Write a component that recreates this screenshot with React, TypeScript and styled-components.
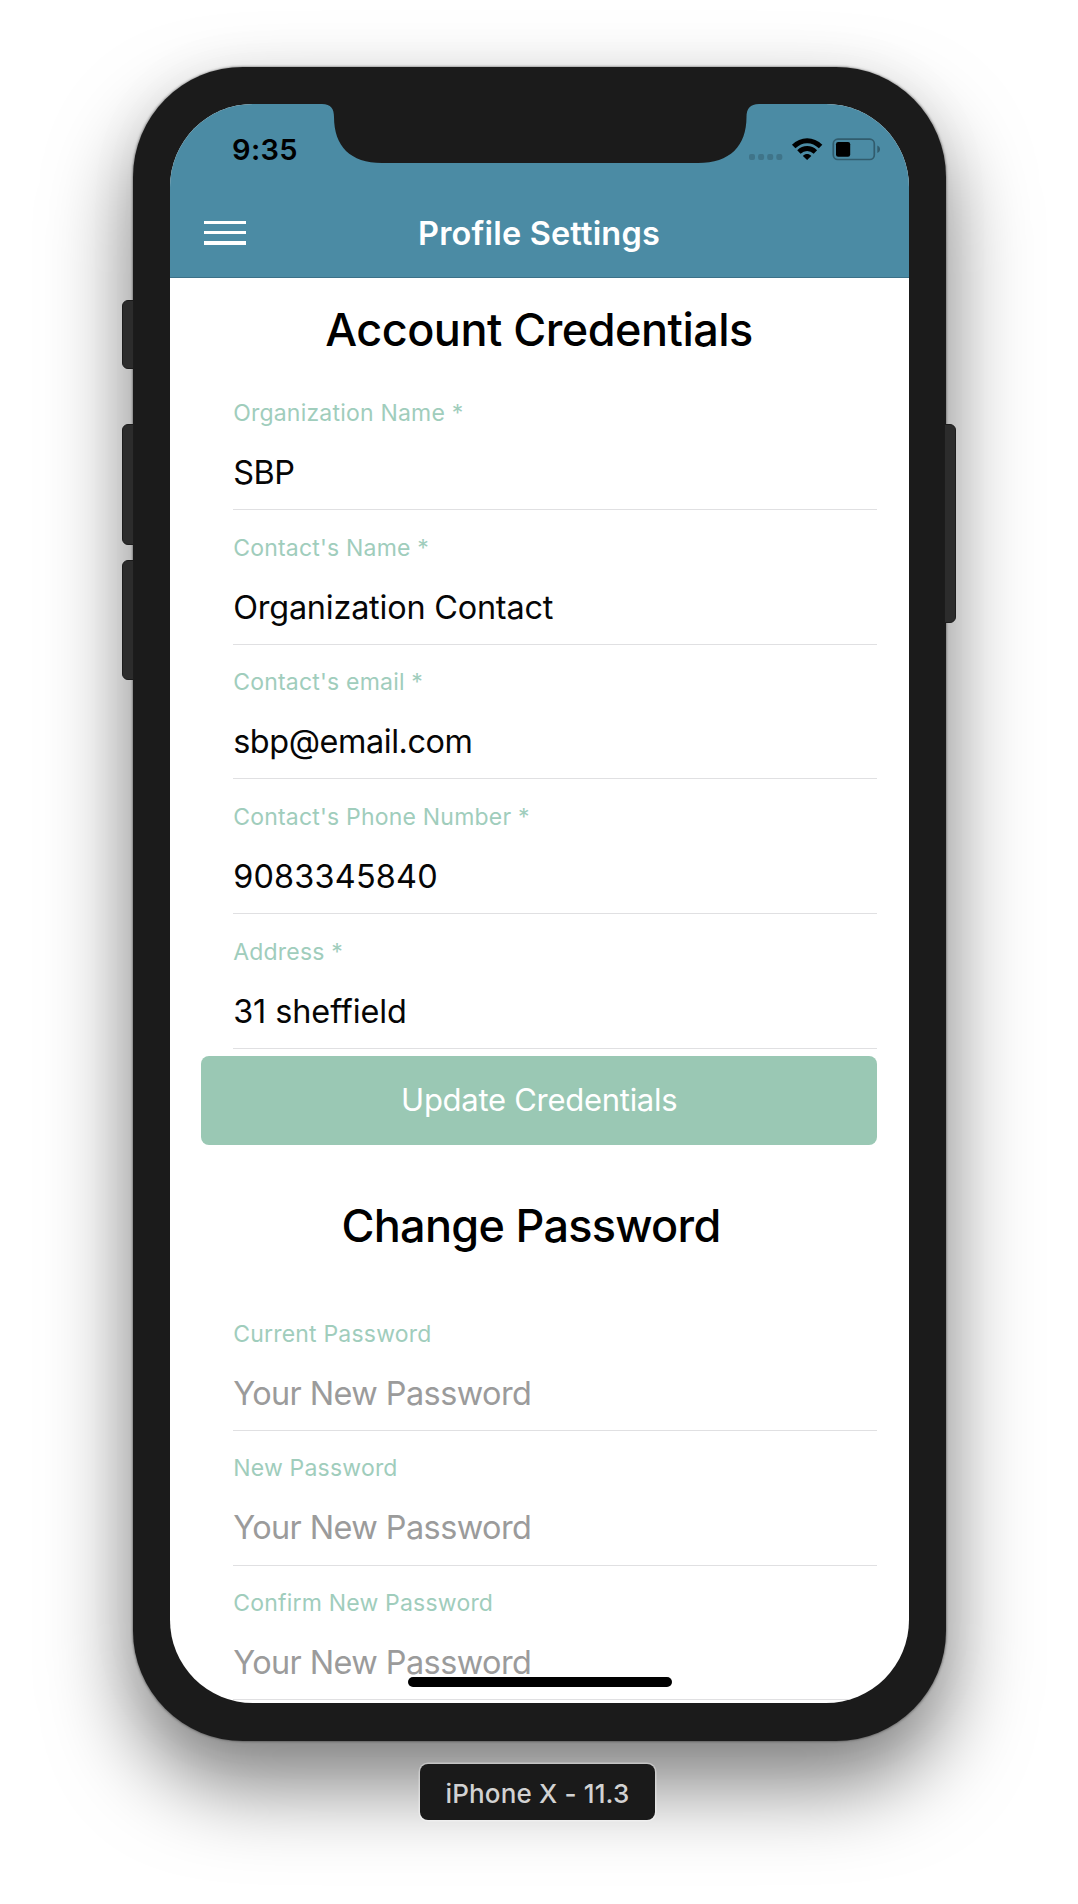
import React from "react";
import styled, { createGlobalStyle } from "styled-components";

const GlobalStyle = createGlobalStyle`
  * { box-sizing: border-box; }
  body { margin: 0; background: #fff; font-family: Inter, "Liberation Sans", sans-serif; }
`;

const Stage = styled.main`
  width: 1078px;
  height: 1904px;
  overflow: hidden;
  padding-top: 67px;
  display: flex;
  flex-direction: column;
  align-items: center;
  background: #fff;
`;

const Phone = styled.section`
  position: relative;
  width: 813px;
  height: 1674px;
  padding: 37px;
  border-radius: 110px;
  background: #1b1b1b;
  box-shadow: 0 0 2px 1px rgba(0, 0, 0, 0.3), 0 44px 84px rgba(0, 0, 0, 0.5), 0 0 60px rgba(0, 0, 0, 0.04);
`;

const SideKey = styled.span<{ $side: "left" | "right"; $top: number; $height: number }>`
  position: absolute;
  ${(p) => p.$side}: ${(p) => (p.$side === "left" ? -11 : -10)}px;
  top: ${(p) => p.$top}px;
  width: 12px;
  height: ${(p) => p.$height}px;
  border: 1.5px solid #1c1c1c;
  border-radius: ${(p) => (p.$side === "left" ? "6px 0 0 6px" : "0 6px 6px 0")};
  background: #2c2c2c;
`;

const Screen = styled.div`
  position: relative;
  width: 739px;
  height: 1599px;
  overflow: hidden;
  display: flex;
  flex-direction: column;
  background: #fff;
  border-radius: 83px;
`;

const Header = styled.header`
  flex: none;
  height: 173.5px;
  display: flex;
  flex-direction: column;
  background: #4b8ba4;
  border-bottom: 1px solid #3c7188;
`;

const StatusBar = styled.div`
  height: 87px;
  display: flex;
  align-items: flex-start;
  justify-content: space-between;
  padding: 31px 28px 0 62.6px;
`;

const Clock = styled.time`
  font-size: 29px;
  line-height: 29px;
  font-weight: 600;
  letter-spacing: 0.3px;
  color: #000;
`;

const StatusGlyphs = styled.svg`
  width: 133px;
  height: 26px;
  margin-top: 1px;
`;

const NavBar = styled.nav`
  flex: 1;
  display: grid;
  grid-template-columns: 42px 1fr 42px;
  align-items: center;
  padding: 0 34px;
`;

const MenuButton = styled.button`
  display: flex;
  flex-direction: column;
  gap: 7px;
  margin-bottom: 2px;
  padding: 0;
  border: 0;
  background: none;
`;

const MenuBar = styled.span`
  height: 3.4px;
  background: #fff;
`;

const NavTitle = styled.h1`
  margin: 0;
  text-align: center;
  font-size: 32.5px;
  line-height: 40px;
  font-weight: 600;
  letter-spacing: 0.18px;
  color: #fff;
`;

const Notch = styled.svg`
  position: absolute;
  left: 150px;
  top: 0;
  width: 440px;
  height: 60px;
`;

const Content = styled.div`
  flex: none;
  display: flex;
  flex-direction: column;
`;

const Heading = styled.h2<{ $height: number; $drop: number; $tracking: number; $shift?: number }>`
  margin: 0 ${(p) => p.$shift ?? 0}px 0 0;
  padding-top: ${(p) => p.$drop}px;
  height: ${(p) => p.$height}px;
  display: flex;
  align-items: center;
  justify-content: center;
  font-size: 45px;
  font-weight: 500;
  letter-spacing: ${(p) => p.$tracking}px;
  color: #000;
`;

const Field = styled.label`
  height: 134.65px;
  margin: 0 32px 0 63px;
  padding-left: 0.7px;
  display: flex;
  flex-direction: column;
  border-bottom: 1.4px solid #e0e0e2;
`;

const FieldLabel = styled.span`
  margin-top: 20.5px;
  font-size: 23px;
  line-height: 34px;
  letter-spacing: 0.2px;
  color: #a0cdbc;
`;

const FieldValue = styled.span<{ $placeholder?: boolean; $tracking: number }>`
  margin-top: 23px;
  font-size: 32.4px;
  line-height: 40px;
  white-space: nowrap;
  letter-spacing: ${(p) => p.$tracking}px;
  color: ${(p) => (p.$placeholder ? "#9b9b9b" : "#060606")};
`;

const SubmitButton = styled.button`
  margin: 7.3px 31.3px 0 31.7px;
  height: 88.6px;
  padding: 0;
  border: 0;
  border-radius: 8px;
  background: #9ac8b4;
  color: #fff;
  font: 400 31px/40px Inter, "Liberation Sans", sans-serif;
  letter-spacing: -0.28px;
`;

const HomeIndicator = styled.span`
  position: absolute;
  left: 238px;
  bottom: 16px;
  width: 264px;
  height: 9.6px;
  border-radius: 5px;
  background: #000;
`;

const DeviceTag = styled.footer`
  position: relative;
  left: -1.5px;
  margin-top: 23px;
  padding-top: 2px;
  width: 235px;
  height: 56px;
  display: flex;
  align-items: center;
  justify-content: center;
  border-radius: 8px;
  background: #1a1a1a;
  box-shadow: 0 0 0 1.5px rgba(255, 255, 255, 0.35);
  color: #d2d2d2;
  font-size: 26px;
  font-weight: 500;
  letter-spacing: 0.15px;
`;

const StatusIcons = () => (
  <StatusGlyphs viewBox="748 136 133 26" aria-hidden="true">
    {[749, 758.1, 767.2, 776.3].map((x) => (
      <rect key={x} x={x} y="154" width="6" height="6" rx="2" fill="#3f7489" />
    ))}
    <g fill="none" stroke="#000" strokeWidth="4.9">
      <path d="M793.7 146.6C801.5 138.8 812.8 138.8 820.6 146.6" />
      <path d="M798.9 152C803.8 147.4 810.5 147.4 815.4 152" />
    </g>
    <path d="M802.9 155.9C805.4 153.5 808.8 153.5 811.3 155.9L807.1 159.9Z" />
    <rect x="833.3" y="139.2" width="41" height="20.3" rx="4.5" fill="none" stroke="#315c6d" strokeWidth="1.7" />
    <rect x="836" y="142" width="14.2" height="14.8" rx="2.2" />
    <path d="M877.3 145.5C881 147 881 151.5 877.3 153Z" fill="#315c6d" />
  </StatusGlyphs>
);

type Entry = { label: string; value: string; tracking: number };

const account: Entry[] = [
  { label: "Organization Name *", value: "SBP", tracking: -0.4 },
  { label: "Contact's Name *", value: "Organization Contact", tracking: -0.2 },
  { label: "Contact's email *", value: "sbp@email.com", tracking: -0.42 },
  { label: "Contact's Phone Number *", value: "9083345840", tracking: 0.2 },
  { label: "Address *", value: "31 sheffield", tracking: -0.08 },
];

const passwords = ["Current Password", "New Password", "Confirm New Password"];

export default function App() {
  return (
    <Stage>
      <GlobalStyle />
      <Phone>
        <SideKey $side="left" $top={233} $height={69} />
        <SideKey $side="left" $top={357} $height={121} />
        <SideKey $side="left" $top={493} $height={120} />
        <SideKey $side="right" $top={357} $height={199} />
        <Screen>
          <Header>
            <StatusBar>
              <Clock>9:35</Clock>
              <StatusIcons />
            </StatusBar>
            <NavBar>
              <MenuButton aria-label="Menu">
                <MenuBar />
                <MenuBar />
                <MenuBar />
              </MenuButton>
              <NavTitle>Profile Settings</NavTitle>
            </NavBar>
          </Header>
          <Content>
            <Heading $height={98} $drop={5} $tracking={-0.5}>Account Credentials</Heading>
            {account.map((f) => (
              <Field key={f.label}>
                <FieldLabel>{f.label}</FieldLabel>
                <FieldValue $tracking={f.tracking}>{f.value}</FieldValue>
              </Field>
            ))}
            <SubmitButton>Update Credentials</SubmitButton>
            <Heading $height={151.7} $drop={10.5} $tracking={-0.72} $shift={16}>Change Password</Heading>
            {passwords.map((label) => (
              <Field key={label}>
                <FieldLabel>{label}</FieldLabel>
                <FieldValue $tracking={-0.56} $placeholder>Your New Password</FieldValue>
              </Field>
            ))}
          </Content>
          <Notch viewBox="320 104 440 60" aria-hidden="true">
            <path fill="#1b1b1b" d="M322 103V104C331 104 334 109 334 117C334 146 350 163 382 163H698C730 163 746.5 146 746.5 117C746.5 109 750 104 759 104V103Z" />
          </Notch>
          <HomeIndicator />
        </Screen>
      </Phone>
      <DeviceTag>iPhone X - 11.3</DeviceTag>
    </Stage>
  );
}
